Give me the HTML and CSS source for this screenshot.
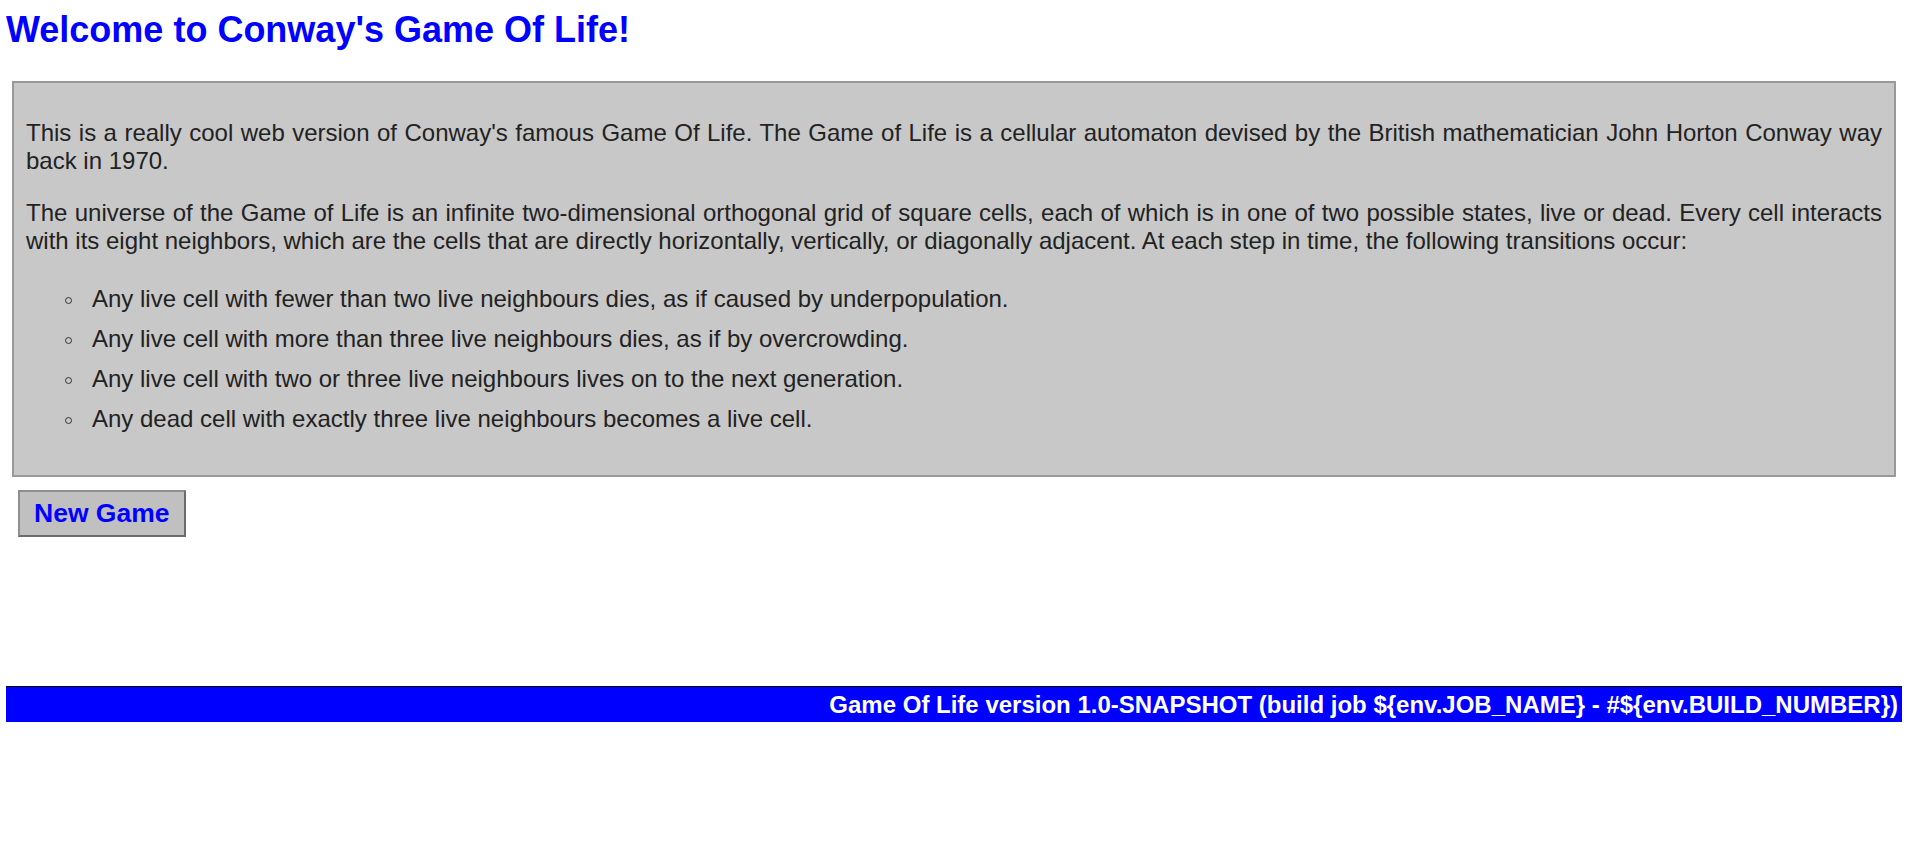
FILE: index.html
```html
<!DOCTYPE html>
<html>
<head>
<meta charset="utf-8">
<title>Conway's Game Of Life</title>
<link rel="stylesheet" href="styles.css">
</head>
<body>
<h1 class="title">Welcome to Conway's Game Of Life!</h1>
<div class="intro">
  <p>This is a really cool web version of Conway's famous Game Of Life. The Game of Life is a cellular automaton devised by the British mathematician John Horton Conway way back in 1970.</p>
  <p>The universe of the Game of Life is an infinite two-dimensional orthogonal grid of square cells, each of which is in one of two possible states, live or dead. Every cell interacts with its eight neighbors, which are the cells that are directly horizontally, vertically, or diagonally adjacent. At each step in time, the following transitions occur:</p>
  <ul class="rules">
    <li>Any live cell with fewer than two live neighbours dies, as if caused by underpopulation.</li>
    <li>Any live cell with more than three live neighbours dies, as if by overcrowding.</li>
    <li>Any live cell with two or three live neighbours lives on to the next generation.</li>
    <li>Any dead cell with exactly three live neighbours becomes a live cell.</li>
  </ul>
</div>
<div class="actions">
  <button class="new-game" type="button">New Game</button>
</div>
<div class="board"></div>
<div class="footer">Game Of Life version 1.0-SNAPSHOT (build job ${env.JOB_NAME} - #${env.BUILD_NUMBER})</div>
</body>
</html>
```

FILE: styles.css
```css
html, body {
  background: #ffffff;
}
body {
  margin: 0;
  padding: 0 12px 0 6px;
  font-family: "Liberation Sans", Arial, sans-serif;
  font-size: 24px;
  color: #222222;
}
.title {
  margin: 9px 0 30px;
  font-size: 36px;
  font-weight: bold;
  color: #0000ff;
}
.intro {
  margin: 0 6px;
  border: 2px solid #999999;
  background: #c8c8c8;
  padding: 12px;
}
.intro p {
  margin: 24px 0;
  text-align: justify;
}
.rules {
  margin: 24px 0;
  padding-left: 66px;
  list-style: none;
}
.rules li {
  line-height: 40px;
}
.rules li::before {
  content: "";
  display: inline-block;
  box-sizing: border-box;
  width: 7px;
  height: 7px;
  border: 1px solid #333333;
  border-radius: 50%;
  margin-left: -27px;
  margin-right: 20px;
  vertical-align: middle;
}
.actions {
  padding: 13px 0 0 12px;
}
.new-game {
  font-family: "Liberation Sans", Arial, sans-serif;
  font-size: 26.5px;
  font-weight: bold;
  color: #0000ff;
  background: #c0c0c0;
  border-style: solid;
  border-width: 2px;
  border-color: #8f8f8f #6b6b6b #6b6b6b #8f8f8f;
  padding: 6px 14px;
  margin: 0;
  line-height: normal;
}
.board {
  height: 149px;
}
.footer {
  border-top: 1px solid #000000;
  background: #0000ff;
  color: #ffffff;
  text-align: right;
  font-weight: bold;
  font-size: 24px;
  line-height: 27px;
  padding: 4px 4px 4px;
}
```
